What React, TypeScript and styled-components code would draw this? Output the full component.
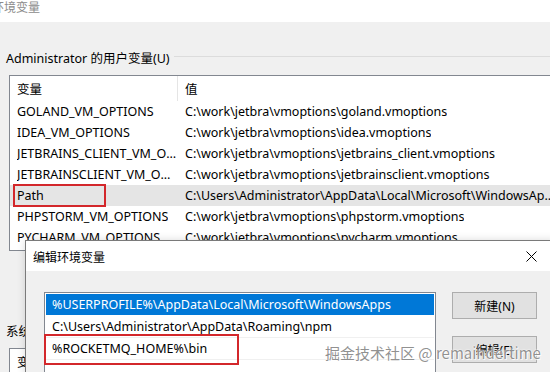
import React from "react";
import styled, { createGlobalStyle } from "styled-components";

const GlobalStyle = createGlobalStyle`
  html, body {
    margin: 0;
    padding: 0;
    background: #f0f0f0;
    overflow: hidden;
  }
  body {
    font-family: "Noto Sans", "Noto Sans CJK SC", sans-serif;
    font-size: 12.5px;
    color: #000;
  }
`;

const Screen = styled.div`
  position: relative;
  width: 550px;
  height: 372px;
  overflow: hidden;
  background: #f0f0f0;
`;

const MainWindow = styled.div`
  display: flex;
  flex-direction: column;
  width: 570px;
`;

const TitleBar = styled.div`
  height: 22px;
  background: #fff;
  color: #8c8c8c;
  font-family: "Noto Sans CJK SC", sans-serif;
  font-size: 12px;
  line-height: 14px;
  text-indent: -8px;
  white-space: nowrap;
`;

const GroupHeader = styled.div<{ $top: number }>`
  display: flex;
  align-items: center;
  gap: 4px;
  height: 16px;
  margin-top: ${(p) => p.$top}px;
  padding-left: 6px;
  white-space: nowrap;
`;

const GroupLine = styled.div`
  flex: 1;
  height: 1px;
  background: #dcdcdc;
  margin-top: -1px;
`;

const ListView = styled.div<{ $height: number }>`
  margin: 10px 0 0 9px;
  height: ${(p) => p.$height}px;
  border: 1px solid #828790;
  border-right: none;
  background: #fff;
  overflow: hidden;
  box-sizing: border-box;
`;

const Row = styled.div<{ $selected?: boolean; $header?: boolean }>`
  position: relative;
  display: grid;
  grid-template-columns: 168px 380px;
  height: ${(p) => (p.$header ? 25 : 21)}px;
  align-items: center;
  background: ${(p) => (p.$selected ? "#e5e5e5" : "transparent")};
`;

const Cell = styled.div<{ $divider?: boolean }>`
  height: 100%;
  display: flex;
  align-items: center;
  padding: 0 1px 0 7px;
  white-space: nowrap;
  overflow: hidden;
  min-width: 0;
  border-right: ${(p) => (p.$divider ? "1px solid #e5e5e5" : "none")};
  box-sizing: border-box;
`;

const CellText = styled.span`
  overflow: hidden;
  text-overflow: ellipsis;
  white-space: nowrap;
`;

const Annotation = styled.div<{ $left: number; $top: number; $w: number; $h: number }>`
  position: absolute;
  left: ${(p) => p.$left}px;
  top: ${(p) => p.$top}px;
  width: ${(p) => p.$w}px;
  height: ${(p) => p.$h}px;
  border: 2px solid #d3272b;
  box-sizing: border-box;
  pointer-events: none;
`;

const Dialog = styled.div`
  position: absolute;
  left: 25px;
  top: 240px;
  width: 528px;
  height: 160px;
  border: 1px solid #7a7a7a;
  background: #f0f0f0;
  display: flex;
  flex-direction: column;
  box-shadow: 0 0 8px rgba(0, 0, 0, 0.15);
`;

const DialogTitle = styled.div`
  height: 30px;
  background: #fff;
  display: flex;
  align-items: center;
  justify-content: space-between;
  padding-left: 7px;
  font-family: "Noto Sans CJK SC", sans-serif;
  font-size: 12px;
`;

const CloseButton = styled.div`
  width: 46px;
  height: 30px;
  display: flex;
  align-items: center;
  justify-content: center;
`;

const DialogBody = styled.div`
  display: flex;
  gap: 16px;
  padding: 21px 0 0 18px;
`;

const EditList = styled.div`
  width: 392px;
  height: 120px;
  border: 1px solid #828790;
  background: #fff;
  box-sizing: border-box;
  padding: 1px;
`;

const EditRow = styled.div<{ $selected?: boolean }>`
  position: relative;
  height: 21px;
  display: flex;
  align-items: center;
  padding-left: 6px;
  margin-bottom: 1px;
  background: ${(p) => (p.$selected ? "#0078d7" : "#fff")};
  color: ${(p) => (p.$selected ? "#fff" : "#000")};
  box-shadow: ${(p) => (p.$selected ? "none" : "0 1px 0 #f0f0f0")};
  white-space: nowrap;
`;

const ButtonColumn = styled.div`
  display: flex;
  flex-direction: column;
  gap: 17px;
`;

const Button = styled.div`
  width: 85px;
  height: 27px;
  box-sizing: border-box;
  border: 1px solid #adadad;
  background: #e1e1e1;
  display: flex;
  align-items: center;
  justify-content: center;
  font-size: 12px;
`;

const Watermark = styled.div`
  position: absolute;
  left: 325px;
  top: 342px;
  font-family: "Noto Sans CJK SC", "Noto Sans", sans-serif;
  font-size: 15px;
  color: rgba(125, 125, 125, 0.85);
  text-shadow: 0 0 1px #fff, 0 0 2px #fff, 1px 1px 0 rgba(255, 255, 255, 0.8);
  white-space: nowrap;
`;

const userVars: [string, string][] = [
  ["GOLAND_VM_OPTIONS", "C:\\work\\jetbra\\vmoptions\\goland.vmoptions"],
  ["IDEA_VM_OPTIONS", "C:\\work\\jetbra\\vmoptions\\idea.vmoptions"],
  ["JETBRAINS_CLIENT_VM_OPTIONS", "C:\\work\\jetbra\\vmoptions\\jetbrains_client.vmoptions"],
  ["JETBRAINSCLIENT_VM_OPTIONS", "C:\\work\\jetbra\\vmoptions\\jetbrainsclient.vmoptions"],
  ["Path", "C:\\Users\\Administrator\\AppData\\Local\\Microsoft\\WindowsApps;C:\\Users"],
  ["PHPSTORM_VM_OPTIONS", "C:\\work\\jetbra\\vmoptions\\phpstorm.vmoptions"],
  ["PYCHARM_VM_OPTIONS", "C:\\work\\jetbra\\vmoptions\\pycharm.vmoptions"],
];

const pathEntries = [
  "%USERPROFILE%\\AppData\\Local\\Microsoft\\WindowsApps",
  "C:\\Users\\Administrator\\AppData\\Roaming\\npm",
  "%ROCKETMQ_HOME%\\bin",
];

export default function App() {
  return (
    <Screen>
      <GlobalStyle />
      <MainWindow>
        <TitleBar>环境变量</TitleBar>
        <GroupHeader $top={27}>
          <span>Administrator 的用户变量(U)</span>
          <GroupLine />
        </GroupHeader>
        <ListView $height={176}>
          <Row $header>
            <Cell $divider>变量</Cell>
            <Cell>值</Cell>
          </Row>
          {userVars.map(([name, value]) => (
            <Row key={name} $selected={name === "Path"}>
              <Cell>
                <CellText>{name}</CellText>
              </Cell>
              <Cell>
                <CellText>{value}</CellText>
              </Cell>
              {name === "Path" && <Annotation $left={3} $top={-1} $w={93} $h={23} />}
            </Row>
          ))}
        </ListView>
        <GroupHeader $top={71}>
          <span>系统变量(S)</span>
          <GroupLine />
        </GroupHeader>
        <ListView $height={60}>
          <Row $header>
            <Cell $divider>变量</Cell>
            <Cell>值</Cell>
          </Row>
        </ListView>
      </MainWindow>

      <Dialog>
        <DialogTitle>
          <span>编辑环境变量</span>
          <CloseButton>
            <svg width="11" height="11" viewBox="0 0 11 11">
              <path d="M0.5 0.5 L10.5 10.5 M10.5 0.5 L0.5 10.5" stroke="#000" strokeWidth="1" fill="none" />
            </svg>
          </CloseButton>
        </DialogTitle>
        <DialogBody>
          <EditList>
            {pathEntries.map((e, i) => (
              <EditRow key={e} $selected={i === 0}>
                {e}
                {i === 2 && <Annotation $left={-2} $top={-4} $w={195} $h={31} />}
              </EditRow>
            ))}
          </EditList>
          <ButtonColumn>
            <Button>新建(N)</Button>
            <Button>编辑(E)</Button>
          </ButtonColumn>
        </DialogBody>
      </Dialog>

      <Watermark>掘金技术社区 @ remaindertime</Watermark>
    </Screen>
  );
}
